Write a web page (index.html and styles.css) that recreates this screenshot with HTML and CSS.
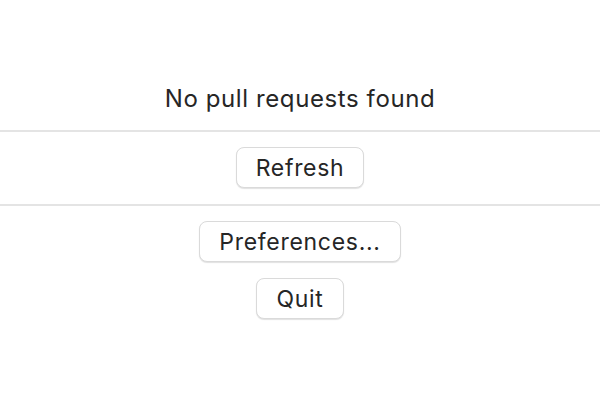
FILE: index.html
```html
<!DOCTYPE html>
<html lang="en">

<head>
    <meta charset="UTF-8">
    <meta name="viewport" content="width=device-width, initial-scale=1.0">
    <title>Pull Requests</title>
    <link rel="stylesheet" href="styles.css">
</head>

<body>
    <main class="menu">
        <p class="menu-empty">No pull requests found</p>

        <hr class="menu-divider">

        <div class="menu-section">
            <button type="button" class="menu-button">Refresh</button>
        </div>

        <hr class="menu-divider">

        <div class="menu-section">
            <button type="button" class="menu-button">Preferences...</button>
            <button type="button" class="menu-button">Quit</button>
        </div>
    </main>
</body>

</html>
```

FILE: styles.css
```css
body {
    margin: 0;
    padding: 0;
    background-color: #ffffff;
    font-family: Inter, "Liberation Sans", Arial, sans-serif;
    color: #262626;
}

.menu {
    display: flex;
    flex-direction: column;
    align-items: stretch;
    padding-top: 86px;
}

.menu-empty {
    margin: 0 0 18px;
    font-size: 24px;
    line-height: 26px;
    letter-spacing: 0.6px;
    text-align: center;
}

.menu-divider {
    margin: 0;
    border: none;
    height: 2px;
    background-color: #e4e4e4;
}

.menu-section {
    display: flex;
    flex-direction: column;
    align-items: center;
    gap: 16px;
    padding: 15px 0 16px;
}

.menu-button {
    height: 41px;
    padding: 0 19px;
    font-family: inherit;
    font-size: 23px;
    letter-spacing: 0.7px;
    color: #262626;
    background-color: #ffffff;
    border: 1px solid #dadada;
    border-radius: 8px;
    box-shadow: 0 1px 1px rgba(0, 0, 0, 0.12);
    cursor: pointer;
}
```
